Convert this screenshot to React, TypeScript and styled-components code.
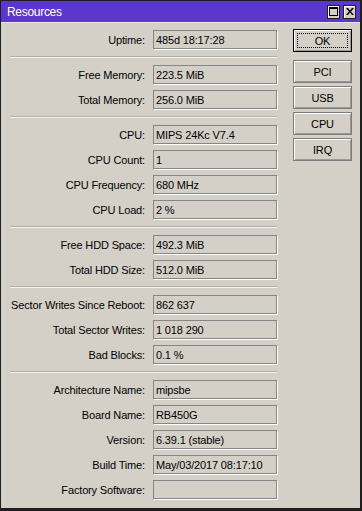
import React from 'react';
import styled, { createGlobalStyle } from 'styled-components';

const GlobalStyle = createGlobalStyle`
  html, body {
    margin: 0;
    padding: 0;
    background: #000;
  }
  body {
    font-family: 'Liberation Sans', Arial, sans-serif;
    font-size: 11px;
    letter-spacing: -0.15px;
    color: #000;
  }
`;

const Window = styled.div`
  width: 362px;
  height: 511px;
  box-sizing: border-box;
  background: #d4d0c8;
  border: 1px solid #1e1e1e;
  border-right-width: 2px;
  border-bottom-width: 3px;
  display: flex;
  flex-direction: column;
`;

const TitleBar = styled.div`
  height: 21px;
  background: #5b37cc;
  border-bottom: 1px solid #e6e3f2;
  display: flex;
  align-items: center;
  justify-content: space-between;
  padding: 0 4px 0 6px;
  color: #fff;
`;

const Title = styled.span`
  font-size: 12px;
  letter-spacing: -0.3px;
`;

const TitleButtons = styled.div`
  display: flex;
  gap: 3px;
`;

const TitleButton = styled.div`
  width: 13px;
  height: 14px;
  box-sizing: border-box;
  background: #d4d0c8;
  border: 1px solid #202020;
  box-shadow: inset 1px 1px 0 #fff;
  display: flex;
  align-items: center;
  justify-content: center;
`;

const Body = styled.div`
  display: flex;
  align-items: flex-start;
  padding: 6px 0 0 9px;
`;

const Form = styled.div`
  width: 267px;
  padding-top: 1px;
  display: flex;
  flex-direction: column;
`;

const Group = styled.div`
  display: flex;
  flex-direction: column;
  gap: 6px;
`;

const Separator = styled.div`
  border-top: 1px solid #b3b0a9;
  border-bottom: 1px solid #f4f3f0;
  margin: 7px 0;
`;

const Row = styled.div`
  display: grid;
  grid-template-columns: 135px 124px;
  column-gap: 8px;
  align-items: center;
  height: 19px;
`;

const Label = styled.span`
  text-align: right;
  white-space: nowrap;
`;

const Field = styled.div`
  height: 19px;
  box-sizing: border-box;
  border: 1px solid #858585;
  box-shadow: 1px 1px 0 #fff;
  padding: 0 2px;
  display: flex;
  align-items: center;
  white-space: nowrap;
  overflow: hidden;
`;

const Buttons = styled.div`
  margin-left: 16px;
  display: flex;
  flex-direction: column;
  gap: 3px;
`;

const Button = styled.button<{ $default?: boolean }>`
  position: relative;
  width: 59px;
  height: 23px;
  box-sizing: border-box;
  padding: 0;
  font-family: 'Liberation Sans', Arial, sans-serif;
  font-size: 11px;
  letter-spacing: -0.15px;
  color: #000;
  background: #d4d0c8;
  border: 1px solid ${p => (p.$default ? '#000' : '#7c7c7c')};
  box-shadow: inset 1px 1px 0 #fff, inset -1px -1px 0 #9a9a9a;
  margin-bottom: ${p => (p.$default ? '5px' : '0')};

  ${p =>
    p.$default &&
    `
    &::after {
      content: '';
      position: absolute;
      inset: 3px;
      border: 1px dotted #000;
    }
  `}
`;

type Item = [string, string];

const groups: Item[][] = [
  [['Uptime:', '485d 18:17:28']],
  [
    ['Free Memory:', '223.5 MiB'],
    ['Total Memory:', '256.0 MiB'],
  ],
  [
    ['CPU:', 'MIPS 24Kc V7.4'],
    ['CPU Count:', '1'],
    ['CPU Frequency:', '680 MHz'],
    ['CPU Load:', '2 %'],
  ],
  [
    ['Free HDD Space:', '492.3 MiB'],
    ['Total HDD Size:', '512.0 MiB'],
  ],
  [
    ['Sector Writes Since Reboot:', '862 637'],
    ['Total Sector Writes:', '1 018 290'],
    ['Bad Blocks:', '0.1 %'],
  ],
  [
    ['Architecture Name:', 'mipsbe'],
    ['Board Name:', 'RB450G'],
    ['Version:', '6.39.1 (stable)'],
    ['Build Time:', 'May/03/2017 08:17:10'],
    ['Factory Software:', ''],
  ],
];

const App: React.FC = () => {
  return (
    <>
      <GlobalStyle />
      <Window>
        <TitleBar>
          <Title>Resources</Title>
          <TitleButtons>
            <TitleButton>
              <svg width="9" height="9" viewBox="0 0 9 9">
                <rect x="0.5" y="0.5" width="8" height="8" fill="none" stroke="#000" />
                <rect x="0" y="0" width="9" height="2" fill="#000" />
              </svg>
            </TitleButton>
            <TitleButton>
              <svg width="8" height="7" viewBox="0 0 8 7">
                <path d="M0 0h2l2 2.5L6 0h2L5 3.5 8 7H6L4 4.5 2 7H0l3-3.5z" fill="#000" />
              </svg>
            </TitleButton>
          </TitleButtons>
        </TitleBar>
        <Body>
          <Form>
            {groups.map((g, gi) => (
              <React.Fragment key={gi}>
                {gi > 0 && <Separator />}
                <Group>
                  {g.map(([label, value]) => (
                    <Row key={label}>
                      <Label>{label}</Label>
                      <Field>{value}</Field>
                    </Row>
                  ))}
                </Group>
              </React.Fragment>
            ))}
          </Form>
          <Buttons>
            <Button $default>OK</Button>
            <Button>PCI</Button>
            <Button>USB</Button>
            <Button>CPU</Button>
            <Button>IRQ</Button>
          </Buttons>
        </Body>
      </Window>
    </>
  );
};

export default App;
